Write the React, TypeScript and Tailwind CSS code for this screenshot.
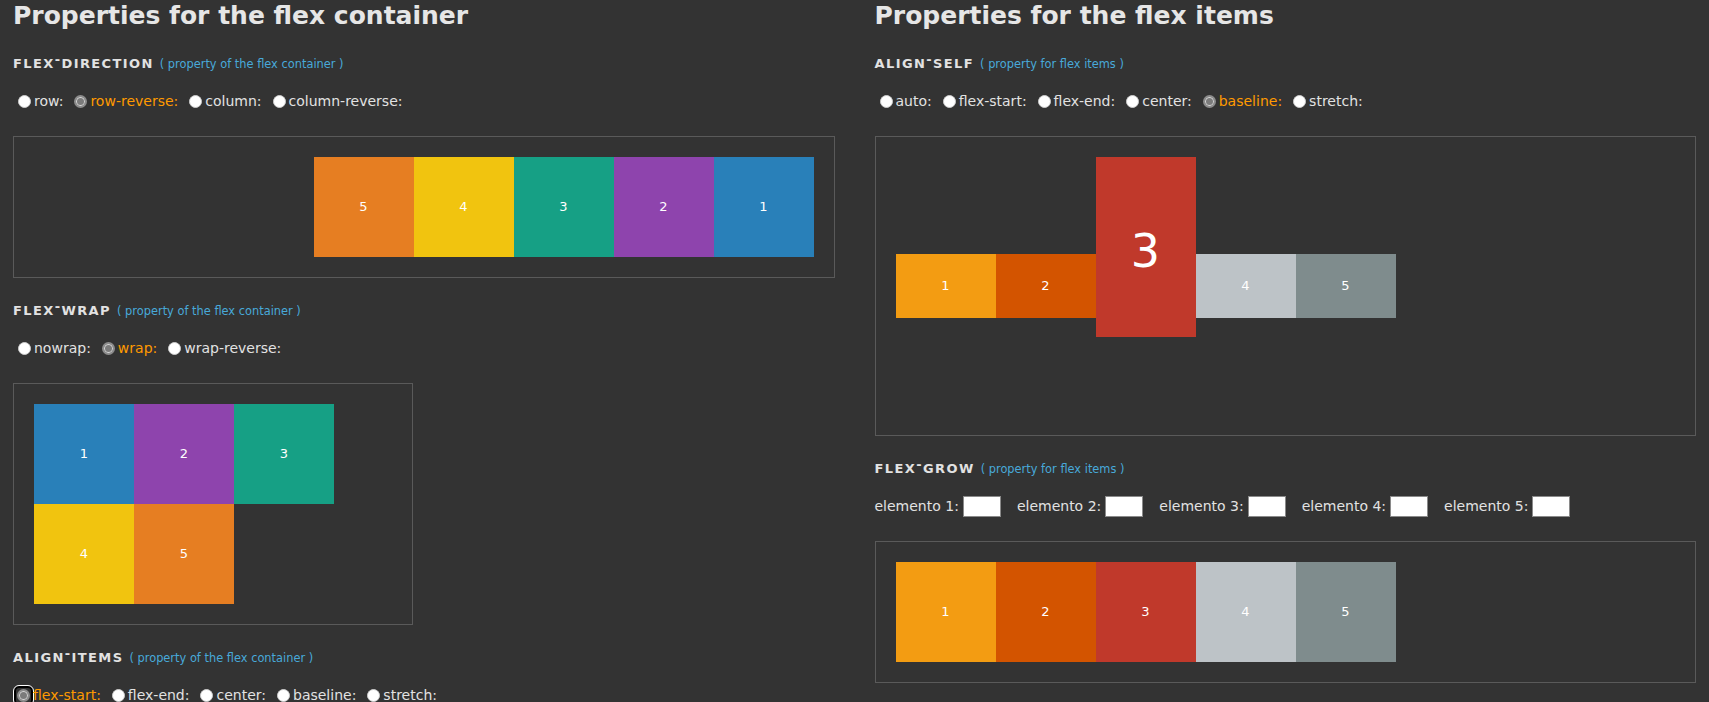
import React from 'react';

const font = "font-['DejaVu_Sans','Liberation_Sans',sans-serif]";

const Radio: React.FC<{ checked?: boolean; focused?: boolean }> = ({ checked, focused }) => {
  const dot = checked ? (
    <span className="block w-[13px] h-[13px] rounded-full bg-[#7b7b7b] border-2 border-[#8c8c8c] shadow-[inset_0_0_0_1px_#d8d8d8]" />
  ) : (
    <span className="block w-[13px] h-[13px] rounded-full bg-white border border-[#cfcfcf]" />
  );
  if (focused) {
    return (
      <span className="ml-[1px] flex items-center justify-center w-[19px] h-[19px] rounded-[5px] border-2 border-black outline outline-1 outline-white">
        {dot}
      </span>
    );
  }
  return <span className="ml-[5px] mr-[3px]">{dot}</span>;
};

const Heading: React.FC<{ first: string; second: string; note: string }> = ({ first, second, note }) => (
  <div className="mt-[19px] h-[20px] leading-[20px] whitespace-nowrap">
    <span className="text-[13px] font-bold tracking-[1.4px] text-[#e2e2e2]">
      {first}
      <span className="align-[4px]">-</span>
      {second}
    </span>
    <span className="ml-[6px] text-[11.4px] text-[#48a9d9]">( {note} )</span>
  </div>
);

const Options: React.FC<{ items: string[]; active: string; focusFirst?: boolean }> = ({ items, active, focusFirst }) => (
  <div className="mt-[21px] h-[20px] flex items-center text-[14px] text-[#e2e2e2]">
    {items.map((o, i) => (
      <label key={o} className="flex items-center mr-[6px]">
        <Radio checked={o === active} focused={focusFirst && i === 0} />
        <span className={o === active ? 'text-[#ff9a00]' : ''}>{o}:</span>
      </label>
    ))}
  </div>
);

const Item: React.FC<{ n: number; color: string; h?: string }> = ({ n, color, h = 'h-[100px]' }) => (
  <div className={`w-[100px] ${h} shrink-0 flex items-center justify-center text-[13px] text-white ${color}`}>{n}</div>
);

const containerColors = ['bg-[#2980b9]', 'bg-[#8e44ad]', 'bg-[#16a085]', 'bg-[#f1c40f]', 'bg-[#e67e22]'];
const itemColors = ['bg-[#f39c12]', 'bg-[#d35400]', 'bg-[#c0392b]', 'bg-[#bdc3c7]', 'bg-[#7f8c8d]'];

const App: React.FC = () => {
  return (
    <div className={`h-[702px] overflow-hidden bg-[#333333] px-[13px] grid grid-cols-2 gap-x-[40px] ${font}`}>
      {/* container column */}
      <div>
        <h1 className="h-[31px] leading-[31px] text-[25px] font-bold text-[#e6e6e6]">Properties for the flex container</h1>

        <Heading first="FLEX" second="DIRECTION" note="property of the flex container" />
        <Options items={['row', 'row-reverse', 'column', 'column-reverse']} active="row-reverse" />
        <div className="mt-[25px] border border-[#5a5a5a] p-[20px] flex flex-row-reverse">
          {[1, 2, 3, 4, 5].map((n) => (
            <Item key={n} n={n} color={containerColors[n - 1]} />
          ))}
        </div>

        <Heading first="FLEX" second="WRAP" note="property of the flex container" />
        <Options items={['nowrap', 'wrap', 'wrap-reverse']} active="wrap" />
        <div className="mt-[25px] w-[400px] border border-[#5a5a5a] p-[20px] flex flex-wrap">
          {[1, 2, 3, 4, 5].map((n) => (
            <Item key={n} n={n} color={containerColors[n - 1]} />
          ))}
        </div>

        <Heading first="ALIGN" second="ITEMS" note="property of the flex container" />
        <Options items={['flex-start', 'flex-end', 'center', 'baseline', 'stretch']} active="flex-start" focusFirst />
      </div>

      {/* items column */}
      <div>
        <h1 className="h-[31px] leading-[31px] text-[25px] font-bold text-[#e6e6e6]">Properties for the flex items</h1>

        <Heading first="ALIGN" second="SELF" note="property for flex items" />
        <Options items={['auto', 'flex-start', 'flex-end', 'center', 'baseline', 'stretch']} active="baseline" />
        <div className="mt-[25px] h-[300px] border border-[#5a5a5a] p-[20px] flex items-center">
          {[1, 2, 3, 4, 5].map((n) =>
            n === 3 ? (
              <div key={n} className="self-start w-[100px] h-[180px] shrink-0 pt-[8px] flex items-center justify-center text-[46px] text-white bg-[#c0392b]">
                3
              </div>
            ) : (
              <Item key={n} n={n} color={itemColors[n - 1]} h="h-[64px]" />
            )
          )}
        </div>

        <Heading first="FLEX" second="GROW" note="property for flex items" />
        <div className="mt-[21px] h-[20px] flex items-center text-[14px] text-[#e2e2e2]">
          {[1, 2, 3, 4, 5].map((n) => (
            <label key={n} className="flex items-center mr-[16px]">
              <span>elemento {n}:</span>
              <input type="text" className="ml-[4px] w-[38px] h-[21px] bg-white border border-[#8a8a8a] outline-none" />
            </label>
          ))}
        </div>
        <div className="mt-[25px] border border-[#5a5a5a] p-[20px] flex">
          {[1, 2, 3, 4, 5].map((n) => (
            <Item key={n} n={n} color={itemColors[n - 1]} />
          ))}
        </div>
      </div>
    </div>
  );
};

export default App;
